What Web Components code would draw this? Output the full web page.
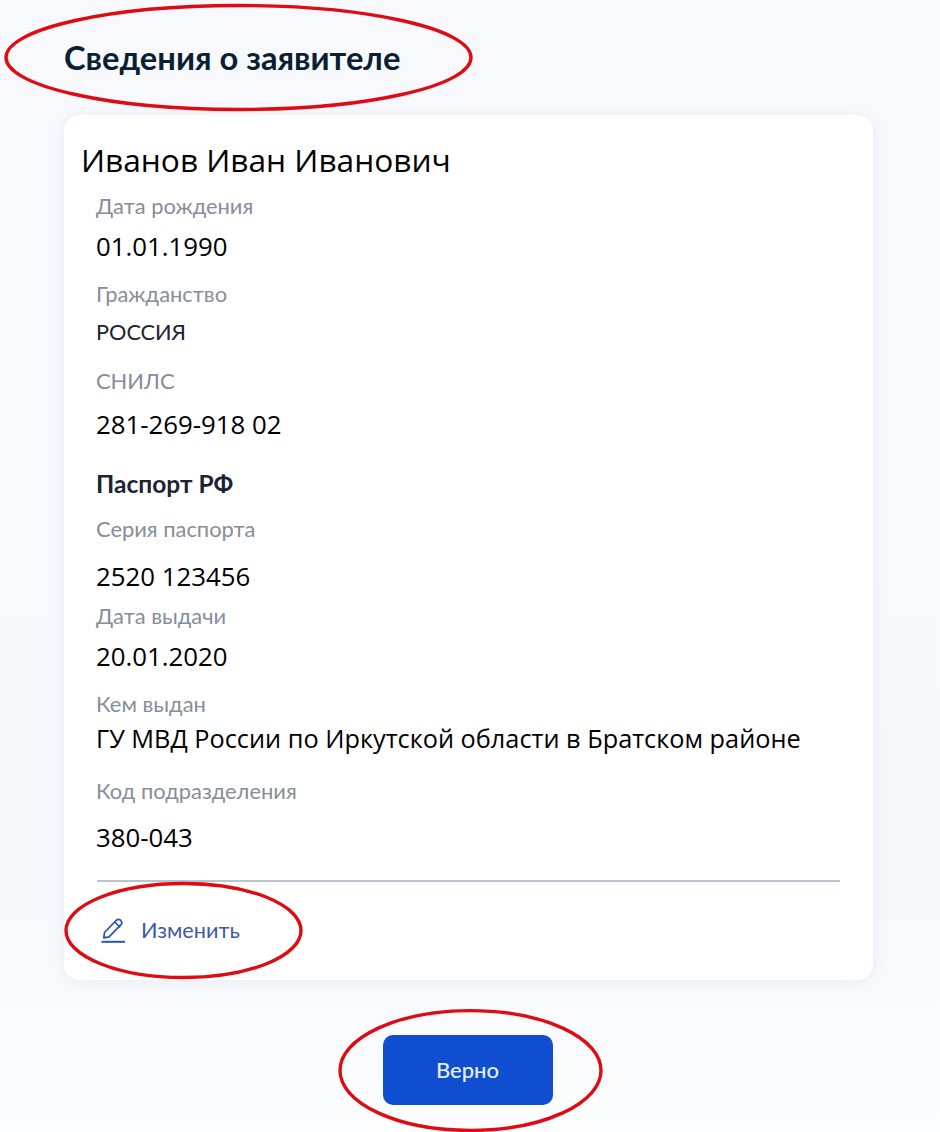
<!DOCTYPE html>
<html lang="ru">
<head>
<meta charset="utf-8">
<title>Сведения о заявителе</title>
<style>
  html, body { margin: 0; padding: 0; }
  body { background: #fff; }
</style>
</head>
<body>
<applicant-page>
  <page-title slot="title">Сведения о заявителе</page-title>
  <info-card>
    <card-name>Иванов Иван Иванович</card-name>
    <info-field label="Дата рождения" value="01.01.1990" gap="13" after="21"></info-field>
    <info-field label="Гражданство" value="РОССИЯ" gap="11" small after="22"></info-field>
    <info-field label="СНИЛС" value="281-269-918 02" gap="16" after="31"></info-field>
    <section-title>Паспорт РФ</section-title>
    <info-field label="Серия паспорта" value="2520 123456" gap="20" after="13"></info-field>
    <info-field label="Дата выдачи" value="20.01.2020" gap="13" after="21"></info-field>
    <info-field label="Кем выдан" value="ГУ МВД России по Иркутской области в Братском районе" size="25.3" gap="7" after="26"></info-field>
    <info-field label="Код подразделения" value="380-043" gap="19" after="0"></info-field>
    <edit-link slot="footer">Изменить</edit-link>
  </info-card>
  <main-button slot="action">Верно</main-button>
  <red-mark style="left:6px;top:5px;width:465px;height:105px"></red-mark>
  <red-mark style="left:66px;top:883px;width:235px;height:95px"></red-mark>
  <red-mark style="left:340px;top:1010px;width:261px;height:121px"></red-mark>
</applicant-page>

<script>
class ApplicantPage extends HTMLElement {
  constructor() {
    super();
    this.attachShadow({ mode: 'open' });
    this.shadowRoot.innerHTML = `
      <style>
        :host {
          display: block;
          position: relative;
          width: 940px;
          height: 1132px;
          overflow: hidden;
          background: linear-gradient(180deg, #f7f9fd 0%, #f6f8fc 80%, #fcfdfe 100%);
        }
        .wrap {
          display: flex;
          flex-direction: column;
          padding: 38px 67px 0 64px;
        }
        .action {
          display: flex;
          justify-content: center;
          padding: 55px 2px 0 0;
        }
      </style>
      <div class="wrap">
        <slot name="title"></slot>
        <slot></slot>
        <div class="action"><slot name="action"></slot></div>
      </div>
    `;
  }
}

class PageTitle extends HTMLElement {
  constructor() {
    super();
    this.attachShadow({ mode: 'open' });
    this.shadowRoot.innerHTML = `
      <style>
        :host {
          display: block;
          height: 77px;
          font: 700 32.7px/40px Lato, "Noto Sans", sans-serif;
          color: #0b1f33;
        }
      </style>
      <slot></slot>
    `;
  }
}

class InfoCard extends HTMLElement {
  constructor() {
    super();
    this.attachShadow({ mode: 'open' });
    this.shadowRoot.innerHTML = `
      <style>
        :host {
          display: block;
          box-sizing: border-box;
          height: 865px;
          padding: 23px 33px 0 17px;
          background: #fff;
          border-radius: 16px;
          box-shadow: 0 2px 16px rgba(102, 124, 162, 0.1);
        }
        .footer {
          margin: 29px 0 0 16px;
          padding-top: 34px;
          border-top: 2px solid #b9c4d0;
        }
      </style>
      <slot></slot>
      <div class="footer"><slot name="footer"></slot></div>
    `;
  }
}

class CardName extends HTMLElement {
  constructor() {
    super();
    this.attachShadow({ mode: 'open' });
    this.shadowRoot.innerHTML = `
      <style>
        :host {
          display: block;
          font: 400 31.66px/44px "Open Sans", sans-serif;
          color: #000;
          margin-bottom: 11px;
        }
      </style>
      <slot></slot>
    `;
  }
}

class SectionTitle extends HTMLElement {
  constructor() {
    super();
    this.attachShadow({ mode: 'open' });
    this.shadowRoot.innerHTML = `
      <style>
        :host {
          display: block;
          margin: 0 0 17px 15px;
          font: 700 24.5px/30px Lato, "Noto Sans", sans-serif;
          color: #1a2433;
        }
      </style>
      <slot></slot>
    `;
  }
}

class InfoField extends HTMLElement {
  constructor() {
    super();
    this.attachShadow({ mode: 'open' });
  }

  connectedCallback() {
    const gap = this.getAttribute('gap') || 10;
    const after = this.getAttribute('after') || 10;
    const small = this.hasAttribute('small');
    const size = this.getAttribute('size') || 25.8;
    this.shadowRoot.innerHTML = `
      <style>
        :host {
          display: block;
          margin: 0 0 ${after}px 15px;
        }
        .label {
          font: 400 21.9px/26px Lato, "Noto Sans", sans-serif;
          color: #868e98;
        }
        .value {
          margin-top: ${gap}px;
          font: 400 ${small ? 21.7 : size}px/28px ${small ? 'Lato, "Noto Sans"' : '"Open Sans"'}, sans-serif;
          color: ${small ? '#1a2433' : '#000'};
          white-space: nowrap;
        }
      </style>
      <div class="label"></div>
      <div class="value"></div>
    `;
    this.shadowRoot.querySelector('.label').textContent = this.getAttribute('label');
    this.shadowRoot.querySelector('.value').textContent = this.getAttribute('value');
  }
}

class EditLink extends HTMLElement {
  constructor() {
    super();
    this.attachShadow({ mode: 'open' });
    this.shadowRoot.innerHTML = `
      <style>
        :host {
          display: flex;
          align-items: center;
          gap: 16px;
          margin-left: 4px;
          font: 400 21.7px/28px Lato, "Noto Sans", sans-serif;
          color: #3f5aa8;
        }
        svg { display: block; width: 24px; height: 26px; }
      </style>
      <svg viewBox="0 0 24 26" fill="none" stroke="#2a55b0" stroke-width="1.7" stroke-linejoin="round">
        <path d="M3.5 15.5 15.5 3.2a2.7 2.7 0 0 1 3.9 0l.6.6a2.7 2.7 0 0 1 0 3.9L8 19.8l-5.2 1z"/>
        <path d="m13.8 5 5.4 5.4"/>
        <path d="M0.5 24.8h23.5" stroke-width="2"/>
      </svg>
      <slot></slot>
    `;
  }
}

class MainButton extends HTMLElement {
  constructor() {
    super();
    this.attachShadow({ mode: 'open' });
    this.shadowRoot.innerHTML = `
      <style>
        :host {
          display: flex;
          align-items: center;
          justify-content: center;
          width: 170px;
          height: 70px;
          background: #0f4dd1;
          border-radius: 10px;
          font: 500 22px/24px Lato, "Noto Sans", sans-serif;
          color: #e8f0fc;
        }
      </style>
      <slot></slot>
    `;
  }
}

// red hand-drawn ovals lying over the screenshot
class RedMark extends HTMLElement {
  constructor() {
    super();
    this.attachShadow({ mode: 'open' });
    this.shadowRoot.innerHTML = `
      <style>
        :host { display: block; position: absolute; }
        svg { display: block; width: 100%; height: 100%; overflow: visible; }
      </style>
      <svg viewBox="0 0 100 100" preserveAspectRatio="none" fill="none">
        <ellipse cx="50" cy="50" rx="50" ry="49.5" stroke="#e00a12" stroke-width="3.4" vector-effect="non-scaling-stroke"/>
      </svg>
    `;
  }
}

customElements.define('applicant-page', ApplicantPage);
customElements.define('page-title', PageTitle);
customElements.define('info-card', InfoCard);
customElements.define('card-name', CardName);
customElements.define('section-title', SectionTitle);
customElements.define('info-field', InfoField);
customElements.define('edit-link', EditLink);
customElements.define('main-button', MainButton);
customElements.define('red-mark', RedMark);
</script>
</body>
</html>
